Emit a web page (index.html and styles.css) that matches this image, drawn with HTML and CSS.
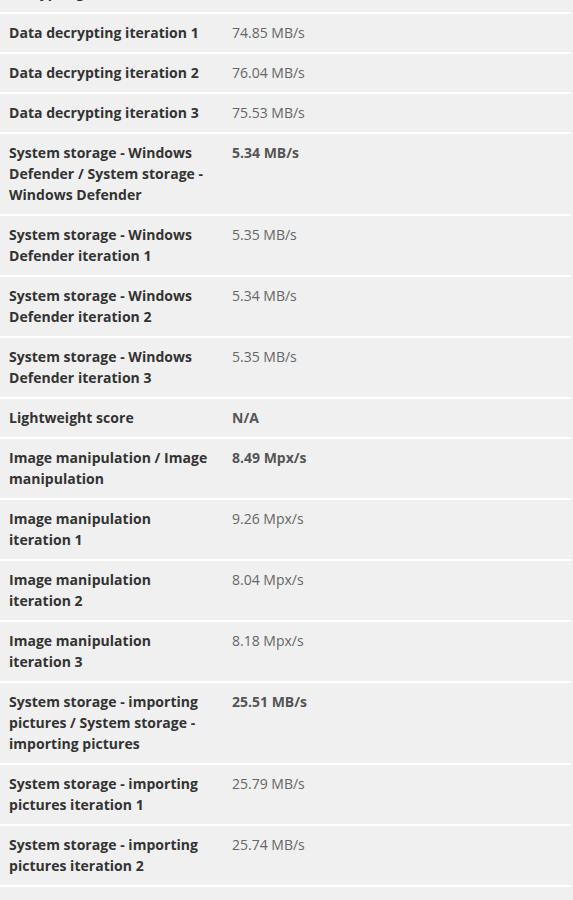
FILE: index.html
```html
<!DOCTYPE html>
<html>
<head>
<meta charset="utf-8">
<link rel="stylesheet" href="styles.css">
</head>
<body>
<div class="results">
  <div class="row"><div class="label">Data decrypting / Data decrypting</div><div class="value strong">75.14 MB/s</div></div>
  <div class="row"><div class="label">Data decrypting iteration 1</div><div class="value">74.85 MB/s</div></div>
  <div class="row"><div class="label">Data decrypting iteration 2</div><div class="value">76.04 MB/s</div></div>
  <div class="row"><div class="label">Data decrypting iteration 3</div><div class="value">75.53 MB/s</div></div>
  <div class="row"><div class="label">System storage - Windows Defender / System storage - Windows Defender</div><div class="value strong">5.34 MB/s</div></div>
  <div class="row"><div class="label">System storage - Windows Defender iteration 1</div><div class="value">5.35 MB/s</div></div>
  <div class="row"><div class="label">System storage - Windows Defender iteration 2</div><div class="value">5.34 MB/s</div></div>
  <div class="row"><div class="label">System storage - Windows Defender iteration 3</div><div class="value">5.35 MB/s</div></div>
  <div class="row"><div class="label">Lightweight score</div><div class="value strong">N/A</div></div>
  <div class="row"><div class="label">Image manipulation / Image manipulation</div><div class="value strong">8.49 Mpx/s</div></div>
  <div class="row"><div class="label">Image manipulation iteration 1</div><div class="value">9.26 Mpx/s</div></div>
  <div class="row"><div class="label">Image manipulation iteration 2</div><div class="value">8.04 Mpx/s</div></div>
  <div class="row"><div class="label">Image manipulation iteration 3</div><div class="value">8.18 Mpx/s</div></div>
  <div class="row"><div class="label">System storage - importing pictures / System storage - importing pictures</div><div class="value strong">25.51 MB/s</div></div>
  <div class="row"><div class="label">System storage - importing pictures iteration 1</div><div class="value">25.79 MB/s</div></div>
  <div class="row"><div class="label">System storage - importing pictures iteration 2</div><div class="value">25.74 MB/s</div></div>
</div>
</body>
</html>
```
FILE: styles.css
```css
html, body {
  margin: 0;
  padding: 0;
  background: #f0f0f0;
}
body {
  font-family: "Open Sans", "Liberation Sans", sans-serif;
  font-size: 14px;
  line-height: 21px;
  overflow: hidden;
}
.results {
  width: 571px;
  margin-top: -47px;
}
.row {
  display: flex;
  border-bottom: 2px solid #ffffff;
}
.label {
  width: 203px;
  flex: none;
  padding: 8px 20px 9px 9px;
  font-weight: 700;
  color: #333333;
  letter-spacing: 0.03px;
}
.value {
  flex: 1;
  padding: 8px 9px 9px 0;
  color: #666666;
}
.value.strong {
  font-weight: 700;
  color: #555555;
}
```
